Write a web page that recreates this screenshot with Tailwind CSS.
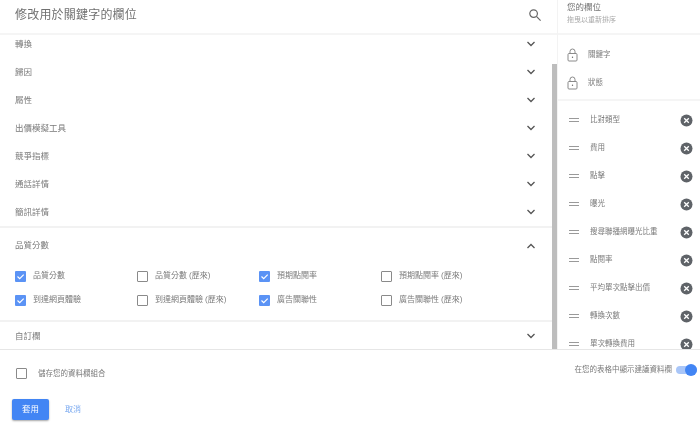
<!DOCTYPE html>
<html lang="zh-TW">
<head>
<meta charset="utf-8">
<script src="https://cdn.jsdelivr.net/npm/@tailwindcss/browser@4"></script>
</head>
<body class="bg-white">
<div class="w-[700px] h-[424px] overflow-hidden flex flex-col bg-white text-[#7a7a7a] font-['Roboto','Noto_Sans_CJK_TC',sans-serif] blur-[0.3px]">
  <div class="flex h-[350px] border-b border-[#e6e6e6]">
    <!-- left -->
    <div class="w-[557px] relative flex flex-col">
      <div class="h-[35px] shrink-0 flex items-center justify-between pl-[15px] pr-[15px] pb-[4px] border-b-2 border-[#f5f5f5] relative z-10 bg-white">
        <span class="text-[12px] tracking-[0.2px] text-[#707070]">修改用於關鍵字的欄位</span>
        <svg class="w-[14px] h-[14px]" viewBox="0 0 14 14" fill="none" stroke="#666" stroke-width="1.2"><circle cx="5.6" cy="5.6" r="3.8"/><path d="M8.4 8.4l4.2 4.2"/></svg>
      </div>
      <div class="flex-1 overflow-hidden">
        <div class="-mt-[5px] text-[8.5px]">
          <div class="h-7 flex items-center justify-between pl-[15px] pr-[20px]"><span>轉換</span><svg class="w-[12px] h-[8px]" viewBox="0 0 12 8" fill="none" stroke="#555" stroke-width="1.3"><path d="M2.5 2l3.5 3.5L9.5 2"/></svg></div>
          <div class="h-7 flex items-center justify-between pl-[15px] pr-[20px]"><span>歸因</span><svg class="w-[12px] h-[8px]" viewBox="0 0 12 8" fill="none" stroke="#555" stroke-width="1.3"><path d="M2.5 2l3.5 3.5L9.5 2"/></svg></div>
          <div class="h-7 flex items-center justify-between pl-[15px] pr-[20px]"><span>屬性</span><svg class="w-[12px] h-[8px]" viewBox="0 0 12 8" fill="none" stroke="#555" stroke-width="1.3"><path d="M2.5 2l3.5 3.5L9.5 2"/></svg></div>
          <div class="h-7 flex items-center justify-between pl-[15px] pr-[20px]"><span>出價模擬工具</span><svg class="w-[12px] h-[8px]" viewBox="0 0 12 8" fill="none" stroke="#555" stroke-width="1.3"><path d="M2.5 2l3.5 3.5L9.5 2"/></svg></div>
          <div class="h-7 flex items-center justify-between pl-[15px] pr-[20px]"><span>競爭指標</span><svg class="w-[12px] h-[8px]" viewBox="0 0 12 8" fill="none" stroke="#555" stroke-width="1.3"><path d="M2.5 2l3.5 3.5L9.5 2"/></svg></div>
          <div class="h-7 flex items-center justify-between pl-[15px] pr-[20px]"><span>通話詳情</span><svg class="w-[12px] h-[8px]" viewBox="0 0 12 8" fill="none" stroke="#555" stroke-width="1.3"><path d="M2.5 2l3.5 3.5L9.5 2"/></svg></div>
          <div class="h-7 flex items-center justify-between pl-[15px] pr-[20px]"><span>簡訊詳情</span><svg class="w-[12px] h-[8px]" viewBox="0 0 12 8" fill="none" stroke="#555" stroke-width="1.3"><path d="M2.5 2l3.5 3.5L9.5 2"/></svg></div>
          <div class="border-t-2 border-[#f2f2f2] h-[94px] flex flex-col">
            <div class="h-[36px] shrink-0 flex items-center justify-between pl-[15px] pr-[20px] pb-[1px]"><span>品質分數</span><svg class="w-[12px] h-[8px]" viewBox="0 0 12 8" fill="none" stroke="#555" stroke-width="1.3"><path d="M2.5 6L6 2.5 9.5 6"/></svg></div>
            <div class="grid grid-cols-[122px_122px_122px_122px] auto-rows-[24px] pl-[15px] text-[8px]">
              <label class="flex items-center gap-[7px]"><svg class="w-[11px] h-[11px]" viewBox="0 0 11 11"><rect width="11" height="11" rx="1" fill="#5b93f5"/><path d="M2.5 5.5l2.2 2.2 4-4" fill="none" stroke="#fff" stroke-width="1.2"/></svg>品質分數</label>
              <label class="flex items-center gap-[7px]"><span class="w-[11px] h-[11px] border border-[#8a8a8a] rounded-[1px]"></span>品質分數 (歷來)</label>
              <label class="flex items-center gap-[7px]"><svg class="w-[11px] h-[11px]" viewBox="0 0 11 11"><rect width="11" height="11" rx="1" fill="#5b93f5"/><path d="M2.5 5.5l2.2 2.2 4-4" fill="none" stroke="#fff" stroke-width="1.2"/></svg>預期點閱率</label>
              <label class="flex items-center gap-[7px]"><span class="w-[11px] h-[11px] border border-[#8a8a8a] rounded-[1px]"></span>預期點閱率 (歷來)</label>
              <label class="flex items-center gap-[7px]"><svg class="w-[11px] h-[11px]" viewBox="0 0 11 11"><rect width="11" height="11" rx="1" fill="#5b93f5"/><path d="M2.5 5.5l2.2 2.2 4-4" fill="none" stroke="#fff" stroke-width="1.2"/></svg>到達網頁體驗</label>
              <label class="flex items-center gap-[7px]"><span class="w-[11px] h-[11px] border border-[#8a8a8a] rounded-[1px]"></span>到達網頁體驗 (歷來)</label>
              <label class="flex items-center gap-[7px]"><svg class="w-[11px] h-[11px]" viewBox="0 0 11 11"><rect width="11" height="11" rx="1" fill="#5b93f5"/><path d="M2.5 5.5l2.2 2.2 4-4" fill="none" stroke="#fff" stroke-width="1.2"/></svg>廣告關聯性</label>
              <label class="flex items-center gap-[7px]"><span class="w-[11px] h-[11px] border border-[#8a8a8a] rounded-[1px]"></span>廣告關聯性 (歷來)</label>
            </div>
          </div>
          <div class="border-t-2 border-[#f2f2f2] h-[30px] flex items-center justify-between pl-[15px] pr-[20px]"><span>自訂欄</span><svg class="w-[12px] h-[8px]" viewBox="0 0 12 8" fill="none" stroke="#555" stroke-width="1.3"><path d="M2.5 2l3.5 3.5L9.5 2"/></svg></div>
        </div>
      </div>
      <div class="absolute right-0 top-[64px] bottom-0 w-[5px] bg-[#bdbdbd]"></div>
    </div>
    <!-- right -->
    <div class="flex-1 flex flex-col border-l border-[#f3f3f3] overflow-hidden">
      <div class="h-[35px] shrink-0 border-b-2 border-[#f5f5f5] pl-[9px] flex flex-col">
        <span class="text-[8.5px] leading-[14px] text-[#707070]">您的欄位</span>
        <span class="text-[7px] leading-[12px] text-[#a8a8a8]">拖曳以重新排序</span>
      </div>
      <div class="h-[66px] shrink-0 border-b-2 border-[#f5f5f5] pt-[5px] text-[7.5px]">
        <div class="h-7 flex items-center gap-[10px] pl-[9px] pt-[1px]"><svg class="w-[11px] h-[14px]" viewBox="0 0 11 14" fill="none" stroke="#8a8a8a" stroke-width="1"><rect x="1" y="5.5" width="9" height="7.5" rx="1"/><path d="M3 5.5V3.5a2.5 2.5 0 0 1 5 0v2"/><circle cx="5.5" cy="9.2" r=".7" fill="#666" stroke="none"/></svg>關鍵字</div>
        <div class="h-7 flex items-center gap-[10px] pl-[9px] pt-[1px]"><svg class="w-[11px] h-[14px]" viewBox="0 0 11 14" fill="none" stroke="#8a8a8a" stroke-width="1"><rect x="1" y="5.5" width="9" height="7.5" rx="1"/><path d="M3 5.5V3.5a2.5 2.5 0 0 1 5 0v2"/><circle cx="5.5" cy="9.2" r=".7" fill="#666" stroke="none"/></svg>狀態</div>
      </div>
      <div class="pt-[5px] text-[7.5px]">
        <div class="h-7 shrink-0 flex items-center pl-[11px] pr-[7px]"><span class="w-[10px] h-[4px] border-y border-[#9a9a9a] mr-[11px]"></span><span class="flex-1">比對類型</span><svg class="w-[13px] h-[13px]" viewBox="0 0 13 13"><circle cx="6.5" cy="6.5" r="6" fill="#5f6368"/><path d="M4.2 4.2l4.6 4.6M8.8 4.2l-4.6 4.6" stroke="#fff" stroke-width="1.3"/></svg></div>
        <div class="h-7 shrink-0 flex items-center pl-[11px] pr-[7px]"><span class="w-[10px] h-[4px] border-y border-[#9a9a9a] mr-[11px]"></span><span class="flex-1">費用</span><svg class="w-[13px] h-[13px]" viewBox="0 0 13 13"><circle cx="6.5" cy="6.5" r="6" fill="#5f6368"/><path d="M4.2 4.2l4.6 4.6M8.8 4.2l-4.6 4.6" stroke="#fff" stroke-width="1.3"/></svg></div>
        <div class="h-7 shrink-0 flex items-center pl-[11px] pr-[7px]"><span class="w-[10px] h-[4px] border-y border-[#9a9a9a] mr-[11px]"></span><span class="flex-1">點擊</span><svg class="w-[13px] h-[13px]" viewBox="0 0 13 13"><circle cx="6.5" cy="6.5" r="6" fill="#5f6368"/><path d="M4.2 4.2l4.6 4.6M8.8 4.2l-4.6 4.6" stroke="#fff" stroke-width="1.3"/></svg></div>
        <div class="h-7 shrink-0 flex items-center pl-[11px] pr-[7px]"><span class="w-[10px] h-[4px] border-y border-[#9a9a9a] mr-[11px]"></span><span class="flex-1">曝光</span><svg class="w-[13px] h-[13px]" viewBox="0 0 13 13"><circle cx="6.5" cy="6.5" r="6" fill="#5f6368"/><path d="M4.2 4.2l4.6 4.6M8.8 4.2l-4.6 4.6" stroke="#fff" stroke-width="1.3"/></svg></div>
        <div class="h-7 shrink-0 flex items-center pl-[11px] pr-[7px]"><span class="w-[10px] h-[4px] border-y border-[#9a9a9a] mr-[11px]"></span><span class="flex-1">搜尋聯播網曝光比重</span><svg class="w-[13px] h-[13px]" viewBox="0 0 13 13"><circle cx="6.5" cy="6.5" r="6" fill="#5f6368"/><path d="M4.2 4.2l4.6 4.6M8.8 4.2l-4.6 4.6" stroke="#fff" stroke-width="1.3"/></svg></div>
        <div class="h-7 shrink-0 flex items-center pl-[11px] pr-[7px]"><span class="w-[10px] h-[4px] border-y border-[#9a9a9a] mr-[11px]"></span><span class="flex-1">點閱率</span><svg class="w-[13px] h-[13px]" viewBox="0 0 13 13"><circle cx="6.5" cy="6.5" r="6" fill="#5f6368"/><path d="M4.2 4.2l4.6 4.6M8.8 4.2l-4.6 4.6" stroke="#fff" stroke-width="1.3"/></svg></div>
        <div class="h-7 shrink-0 flex items-center pl-[11px] pr-[7px]"><span class="w-[10px] h-[4px] border-y border-[#9a9a9a] mr-[11px]"></span><span class="flex-1">平均單次點擊出價</span><svg class="w-[13px] h-[13px]" viewBox="0 0 13 13"><circle cx="6.5" cy="6.5" r="6" fill="#5f6368"/><path d="M4.2 4.2l4.6 4.6M8.8 4.2l-4.6 4.6" stroke="#fff" stroke-width="1.3"/></svg></div>
        <div class="h-7 shrink-0 flex items-center pl-[11px] pr-[7px]"><span class="w-[10px] h-[4px] border-y border-[#9a9a9a] mr-[11px]"></span><span class="flex-1">轉換次數</span><svg class="w-[13px] h-[13px]" viewBox="0 0 13 13"><circle cx="6.5" cy="6.5" r="6" fill="#5f6368"/><path d="M4.2 4.2l4.6 4.6M8.8 4.2l-4.6 4.6" stroke="#fff" stroke-width="1.3"/></svg></div>
        <div class="h-7 shrink-0 flex items-center pl-[11px] pr-[7px]"><span class="w-[10px] h-[4px] border-y border-[#9a9a9a] mr-[11px]"></span><span class="flex-1">單次轉換費用</span><svg class="w-[13px] h-[13px]" viewBox="0 0 13 13"><circle cx="6.5" cy="6.5" r="6" fill="#5f6368"/><path d="M4.2 4.2l4.6 4.6M8.8 4.2l-4.6 4.6" stroke="#fff" stroke-width="1.3"/></svg></div>
      </div>
    </div>
  </div>
  <!-- footer -->
  <div class="flex-1 flex flex-col relative">
    <div class="h-[41px] mt-[3px] flex items-center justify-between pl-[16px] pr-[3px]">
      <label class="flex items-center gap-[11px] text-[7.5px]"><span class="w-[11px] h-[11px] border border-[#8a8a8a] rounded-[1px]"></span>儲存您的資料欄組合</label>
      <div class="flex items-center gap-[4px] text-[7.5px] -mt-[8px]">
        <span>在您的表格中顯示建議資料欄</span>
        <span class="relative w-[21px] h-[8px] rounded-full bg-[#a9c6f8]"><span class="absolute right-0 -top-[2px] w-[12px] h-[12px] rounded-full bg-[#4285f4]"></span></span>
      </div>
    </div>
    <div class="flex items-center pl-[12px] mt-[5px] gap-[16px]">
      <button class="w-[37px] h-[21px] rounded-[2px] bg-[#4285f4] text-white text-[8.5px] shadow-[0_1px_2px_rgba(0,0,0,0.35)]">套用</button>
      <span class="text-[8px] text-[#7baaf0]">取消</span>
    </div>
  </div>
</div>
</body>
</html>
